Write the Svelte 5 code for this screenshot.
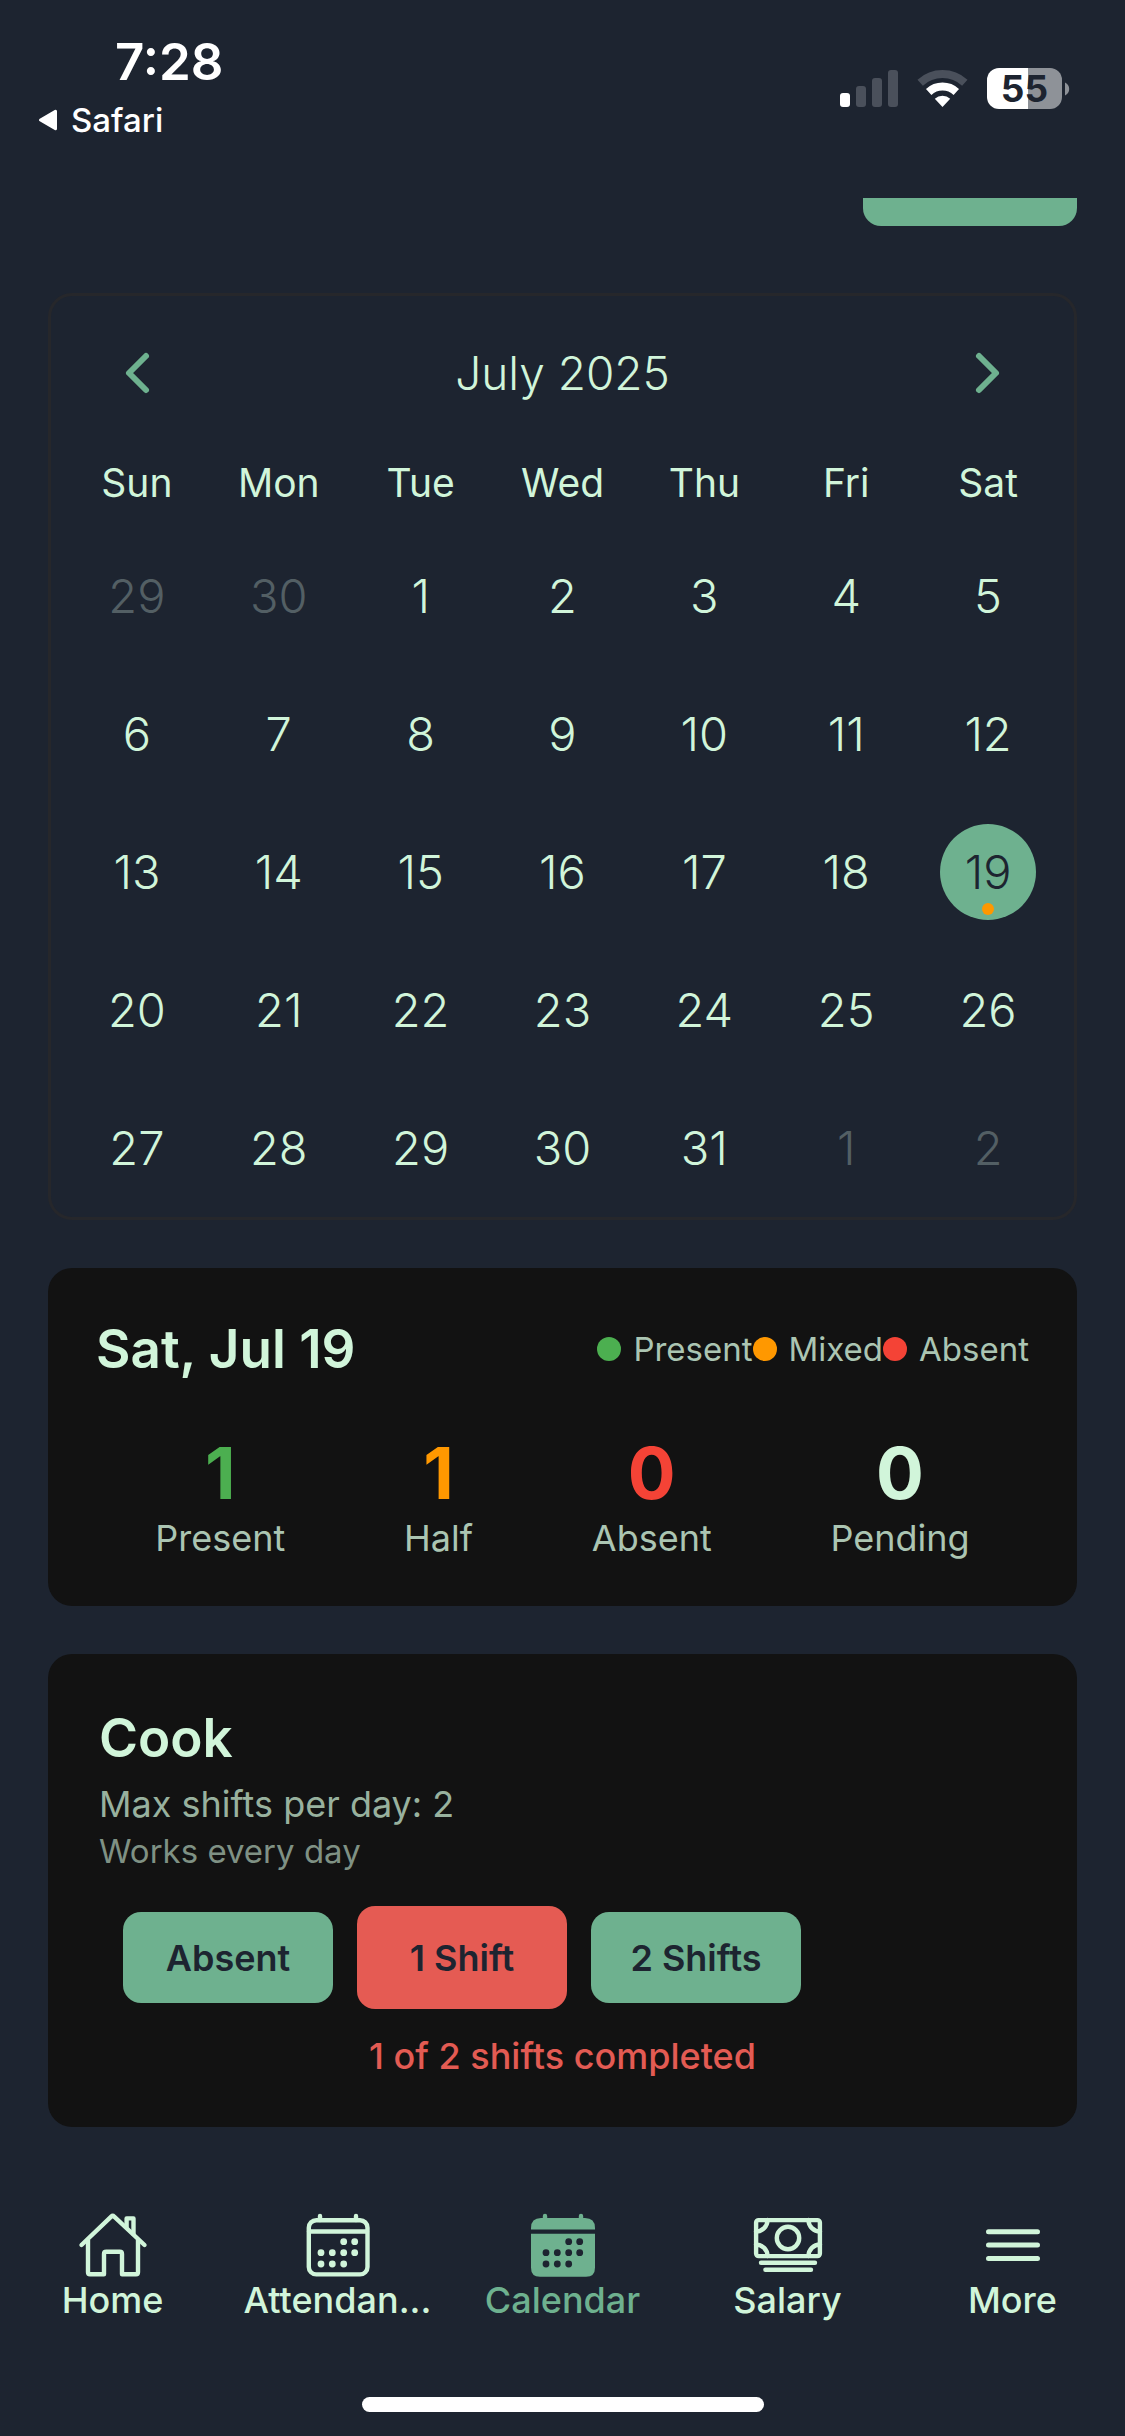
<script>
  const weekdays = ['Sun', 'Mon', 'Tue', 'Wed', 'Thu', 'Fri', 'Sat'];

  const days = [
    { n: 29, outside: true },
    { n: 30, outside: true },
    ...Array.from({ length: 31 }, (_, i) => ({ n: i + 1, outside: false })),
    { n: 1, outside: true },
    { n: 2, outside: true },
  ];

  const legend = [
    { label: 'Present', tone: 'present' },
    { label: 'Mixed', tone: 'mixed' },
    { label: 'Absent', tone: 'absent' },
  ];

  const stats = [
    { value: 1, label: 'Present', tone: 'present' },
    { value: 1, label: 'Half', tone: 'mixed' },
    { value: 0, label: 'Absent', tone: 'absent' },
    { value: 0, label: 'Pending', tone: 'pending' },
  ];

  const dots = [
    [41.7, 31.7], [52.7, 31.7],
    [19, 42.7], [30.3, 42.7], [41.7, 42.7], [52.7, 42.7],
    [19, 54], [30.3, 54], [41.7, 54],
  ];

  const tabs = [
    { id: 'home', label: 'Home' },
    { id: 'attendance', label: 'Attendan...' },
    { id: 'calendar', label: 'Calendar' },
    { id: 'salary', label: 'Salary' },
    { id: 'more', label: 'More' },
  ];

  let selected = $state(19);
  let shift = $state('1 Shift');
  const shiftOptions = ['Absent', '1 Shift', '2 Shifts'];
</script>

<div class="app">
  <header class="status">
    <div class="status-left">
      <span class="time">7:28</span>
      <a class="back" href="#safari">
        <svg width="22" height="24" viewBox="0 0 22 24" aria-hidden="true">
          <path d="M18.5 3.2V20.8L3.5 12Z" fill="#fff" stroke="#fff" stroke-width="3" stroke-linejoin="round" />
        </svg>
        Safari
      </a>
    </div>
    <div class="status-right">
      <svg width="58" height="38" viewBox="0 0 58 38" aria-label="Signal">
        <rect x="0" y="23" width="10" height="14" rx="3" fill="#fff" />
        <rect x="16" y="16" width="10" height="21" rx="3" fill="#4a505b" />
        <rect x="32" y="8" width="10" height="29" rx="3" fill="#4a505b" />
        <rect x="48" y="0" width="10" height="37" rx="3" fill="#4a505b" />
      </svg>
      <svg width="51" height="38" viewBox="0 0 51 38" fill="none" stroke-width="8" aria-label="Wi-Fi">
        <path d="M3.2 12.7A33 33 0 0 1 47.8 12.7" stroke="#4a505b" />
        <path d="M11.7 22A20.4 20.4 0 0 1 39.3 22" stroke="#fff" />
        <path d="M25.5 37L17.8 28.7A11.3 11.3 0 0 1 33.2 28.7Z" fill="#fff" />
      </svg>
      <div class="battery">
        <span class="level">55</span>
        <svg width="5" height="14" viewBox="0 0 5 14" aria-hidden="true">
          <path d="M0 0.5C5.6 3 5.6 11 0 13.5Z" fill="#8e9298" />
        </svg>
      </div>
    </div>
  </header>

  <main>
    <div class="peek"><button class="peek-button" aria-label="Action"></button></div>

    <section class="calendar">
      <div class="month">
        <button class="arrow" aria-label="Previous month">
          <svg width="28" height="44" viewBox="0 0 28 44"><path d="M23 5L6 22L23 39" /></svg>
        </button>
        <h2>July 2025</h2>
        <button class="arrow" aria-label="Next month">
          <svg width="28" height="44" viewBox="0 0 28 44"><path d="M5 5L22 22L5 39" /></svg>
        </button>
      </div>
      <div class="week">
        {#each weekdays as name}<span>{name}</span>{/each}
      </div>
      <div class="days">
        {#each days as day}
          <button
            class="day"
            class:outside={day.outside}
            class:selected={!day.outside && day.n === selected}
            onclick={() => { if (!day.outside) selected = day.n; }}
          >
            {day.n}
            {#if !day.outside && day.n === 19}<i class="mark"></i>{/if}
          </button>
        {/each}
      </div>
    </section>

    <section class="card summary">
      <div class="summary-head">
        <h3>Sat, Jul 19</h3>
        <div class="legend">
          {#each legend as item}
            <span class="legend-item"><i class="dot {item.tone}"></i>{item.label}</span>
          {/each}
        </div>
      </div>
      <div class="stats">
        {#each stats as stat}
          <div class="stat">
            <strong class={stat.tone}>{stat.value}</strong>
            <span>{stat.label}</span>
          </div>
        {/each}
      </div>
    </section>

    <section class="card worker">
      <h3>Cook</h3>
      <p class="max">Max shifts per day: 2</p>
      <p class="works">Works every day</p>
      <div class="shifts">
        {#each shiftOptions as option}
          <button class="shift" class:active={option === shift} onclick={() => (shift = option)}>{option}</button>
        {/each}
      </div>
      <p class="done">1 of 2 shifts completed</p>
    </section>
  </main>

  <nav>
    {#each tabs as tab}
      <a href="#{tab.id}" class:current={tab.id === 'calendar'}>
        <svg class="icon" width="72" height="68" viewBox="0 0 72 68" aria-hidden="true">
          {#if tab.id === 'home'}
            <path d="M4.5 35L34.2 6.6Q35.7 5.2 37.2 6.6L67.5 35" />
            <path d="M11 30V62.3Q11 64.3 13 64.3H27V44Q27 41.8 29.2 41.8H42.8Q45 41.8 45 44V64.3H59Q61 64.3 61 62.3V30" />
            <path d="M49.6 17V8.4H56.5V24" />
          {:else if tab.id === 'attendance'}
            <rect x="6.8" y="10.2" width="58.7" height="54.2" rx="7.5" />
            <path d="M7 21.5H65M18 6V10M54 6V10" />
            {#each dots as [x, y]}<circle class="solid" cx={x} cy={y} r="3.4" />{/each}
          {:else if tab.id === 'calendar'}
            <path d="M18 6V10M54 6V10" />
            <path class="solid" d="M4 19.4V18Q4 8 14 8H58Q68 8 68 18V19.4Z" />
            <path class="solid" d="M4 23.7H68V57.7Q68 66.7 59 66.7H13Q4 66.7 4 57.7Z" />
            {#each dots as [x, y]}<circle class="hole" cx={x} cy={y} r="3.4" />{/each}
          {:else if tab.id === 'salary'}
            <rect x="4.1" y="10.1" width="63.8" height="36" rx="2.5" />
            <circle cx="36" cy="28" r="11.2" />
            <path d="M15.5 10A11.5 11.5 0 0 1 4 21.5M56.5 10A11.5 11.5 0 0 0 68 21.5M15.5 46A11.5 11.5 0 0 0 4 34.5M56.5 46A11.5 11.5 0 0 1 68 34.5" />
            <path d="M9 52.7H63M13.4 59.8H59" />
          {:else}
            <path stroke-width="5" d="M11.5 21.7H60.5M11.5 35H60.5M11.5 48.4H60.5" />
          {/if}
        </svg>
        <span>{tab.label}</span>
      </a>
    {/each}
  </nav>
  <div class="indicator"></div>
</div>

<style>
  :global(body) {
    background: #1d2430;
  }
  .app {
    box-sizing: border-box;
    min-height: 100vh;
    display: flex;
    flex-direction: column;
    background: #1d2430;
    color: #d1f5da;
    font-family: Inter, 'Liberation Sans', sans-serif;
  }
  h2, h3, p {
    margin: 0;
  }
  button {
    padding: 0;
    border: 0;
    background: none;
    color: inherit;
    font: inherit;
    cursor: pointer;
  }
  a {
    color: inherit;
    text-decoration: none;
  }

  .status {
    display: flex;
    justify-content: space-between;
    align-items: flex-start;
    height: 166px;
    padding: 32px 55px 0 37px;
    color: #fff;
  }
  .status-left {
    display: flex;
    flex-direction: column;
    gap: 8px;
  }
  .time {
    padding-left: 78px;
    font-size: 51px;
    line-height: 60px;
    font-weight: 600;
  }
  .back {
    display: flex;
    align-items: center;
    gap: 12px;
    font-size: 33px;
    line-height: 40px;
    font-weight: 500;
  }
  .status-right {
    display: flex;
    align-items: center;
    gap: 19px;
    margin-top: 36px;
  }
  .battery {
    display: flex;
    align-items: center;
    gap: 3px;
  }
  .level {
    width: 75px;
    border-radius: 12px;
    background: linear-gradient(90deg, #fff 55%, #8e9298 55%);
    color: #1d2430;
    font-size: 37px;
    line-height: 41px;
    font-weight: 700;
    text-align: center;
  }

  main {
    display: flex;
    flex-direction: column;
    gap: 48px;
    padding: 0 48px;
  }
  .peek {
    display: flex;
    justify-content: flex-end;
    height: 47px;
  }
  .peek-button {
    width: 214px;
    height: 28px;
    border-radius: 0 0 18px 18px;
    background: #6eb18f;
  }

  .calendar {
    padding: 15px 15px 21px;
    border: 3px solid #26272b;
    border-radius: 24px;
  }
  .month {
    display: flex;
    justify-content: space-between;
    align-items: center;
    padding: 34px 57px 0;
  }
  .month h2 {
    font-size: 46px;
    line-height: 56px;
    font-weight: 300;
  }
  .arrow {
    display: flex;
  }
  .arrow path {
    fill: none;
    stroke: #6eb18f;
    stroke-width: 6;
    stroke-linecap: round;
    stroke-linejoin: round;
  }
  .week, .days {
    display: grid;
    grid-template-columns: repeat(7, 1fr);
    justify-items: center;
  }
  .week {
    margin: 58px 0 41px;
    font-size: 39px;
    line-height: 48px;
  }
  .days {
    row-gap: 42px;
  }
  .day {
    position: relative;
    width: 96px;
    height: 96px;
    border-radius: 50%;
    font-size: 47px;
    line-height: 56px;
    font-weight: 300;
  }
  .outside {
    color: #535f64;
  }
  .selected {
    background: #6eb18f;
    color: #1d2430;
  }
  .mark {
    position: absolute;
    left: 42px;
    bottom: 5px;
    width: 12px;
    height: 12px;
    border-radius: 50%;
    background: #ff9800;
  }

  .card {
    border-radius: 24px;
    background: #121212;
  }
  .card h3 {
    font-size: 53px;
    line-height: 66px;
    font-weight: 600;
  }
  .summary {
    padding: 48px 48px 46px;
  }
  .summary-head {
    display: flex;
    justify-content: space-between;
    align-items: center;
  }
  .legend {
    display: flex;
    font-size: 33px;
    line-height: 40px;
    color: #abc5b2;
  }
  .legend-item {
    display: flex;
    align-items: center;
    gap: 12px;
  }
  .dot {
    width: 24px;
    height: 24px;
    border-radius: 50%;
    background: currentColor;
  }
  .present {
    color: #4caf50;
  }
  .mixed {
    color: #ff9800;
  }
  .absent {
    color: #f44336;
  }
  .stats {
    display: flex;
    justify-content: space-around;
    margin-top: 48px;
  }
  .stat {
    display: flex;
    flex-direction: column;
    align-items: center;
  }
  .stat strong {
    font-size: 71px;
    line-height: 86px;
    font-weight: 700;
  }
  .stat span {
    font-size: 36px;
    line-height: 44px;
    color: #abc5b2;
  }

  .worker {
    padding: 51px 51px 49px;
  }
  .max {
    margin-top: 11px;
    font-size: 36px;
    line-height: 44px;
    color: #98b19e;
  }
  .works {
    margin-top: 5px;
    font-size: 33px;
    line-height: 40px;
    color: #7f9184;
  }
  .shifts {
    display: flex;
    align-items: center;
    gap: 24px;
    margin-top: 35px;
    padding-left: 24px;
  }
  .shift {
    width: 210px;
    height: 91px;
    border-radius: 18px;
    background: #6eb18f;
    color: #1d2430;
    font-size: 36px;
    line-height: 44px;
    font-weight: 600;
  }
  .shift.active {
    height: 103px;
    background: #e55b53;
  }
  .done {
    margin-top: 25px;
    color: #e35b53;
    font-size: 36px;
    line-height: 44px;
    font-weight: 500;
    text-align: center;
  }

  nav {
    display: grid;
    grid-template-columns: repeat(5, 1fr);
    margin-top: auto;
    padding-top: 48px;
  }
  nav a {
    display: flex;
    flex-direction: column;
    align-items: center;
    font-size: 36px;
    line-height: 44px;
    font-weight: 500;
  }
  .current {
    color: #6eb18f;
  }
  .icon {
    fill: none;
    stroke: currentColor;
    stroke-width: 4.4;
    stroke-linecap: round;
    stroke-linejoin: round;
  }
  .icon .solid {
    fill: currentColor;
    stroke: none;
  }
  .icon .hole {
    fill: #1d2430;
    stroke: none;
  }
  .indicator {
    width: 402px;
    height: 15px;
    margin: 75px auto 24px;
    border-radius: 8px;
    background: #fff;
  }
</style>
